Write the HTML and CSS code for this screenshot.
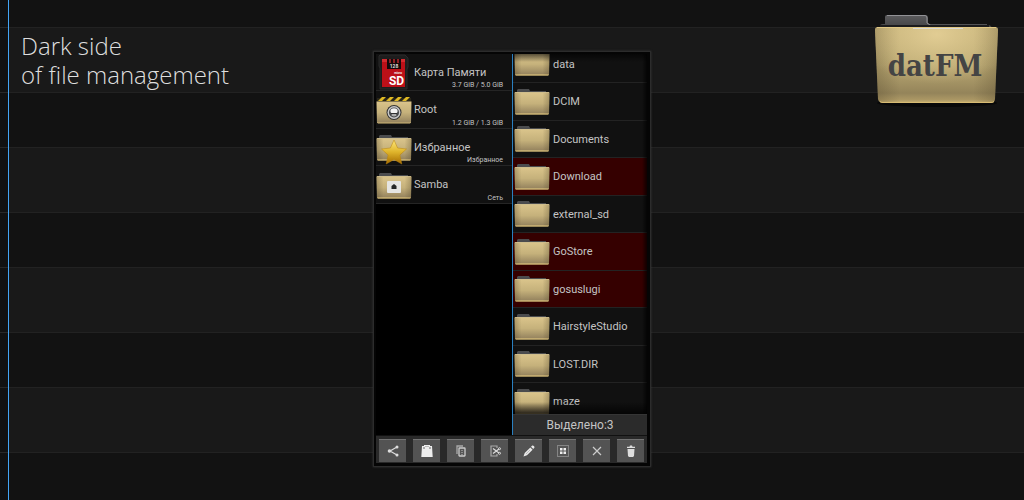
FILE: index.html
```html
<!DOCTYPE html>
<html lang="en">
<head>
<meta charset="utf-8">
<title>datFM</title>
<link rel="stylesheet" href="styles.css">
</head>
<body>
<svg class="defs" aria-hidden="true">
  <defs>
    <linearGradient id="tan" x1="0" y1="0" x2="0" y2="1">
      <stop offset="0" stop-color="#c9b57b"/><stop offset=".5" stop-color="#bba973"/><stop offset=".87" stop-color="#94845a"/><stop offset=".96" stop-color="#ac9865"/><stop offset="1" stop-color="#d0b673"/>
    </linearGradient>
    <radialGradient id="glow" cx=".5" cy=".1" r=".65">
      <stop offset="0" stop-color="#e6d198" stop-opacity=".85"/><stop offset="1" stop-color="#d9c58c" stop-opacity="0"/>
    </radialGradient>
    <linearGradient id="sides" x1="0" y1="0" x2="1" y2="0">
      <stop offset="0" stop-color="#4a3e24" stop-opacity=".3"/><stop offset=".2" stop-color="#4a3e24" stop-opacity="0"/><stop offset=".8" stop-color="#4a3e24" stop-opacity="0"/><stop offset="1" stop-color="#4a3e24" stop-opacity=".3"/>
    </linearGradient>
    <linearGradient id="small" x1="0" y1="0" x2="0" y2="1">
      <stop offset="0" stop-color="#dac48b"/><stop offset=".5" stop-color="#c5b17b"/><stop offset=".92" stop-color="#988660"/><stop offset="1" stop-color="#d6bd79"/>
    </linearGradient>
    <linearGradient id="tab" x1="0" y1="0" x2="0" y2="1">
      <stop offset="0" stop-color="#5c5c5e"/><stop offset="1" stop-color="#38383a"/>
    </linearGradient>
    <linearGradient id="gold" x1="0" y1="0" x2="0" y2="1">
      <stop offset="0" stop-color="#ffe878"/><stop offset=".5" stop-color="#dfb42b"/><stop offset="1" stop-color="#a56b00"/>
    </linearGradient>
    <symbol id="folder" viewBox="0 0 36 28">
      <path d="M3 4V2l1-1h11l1 2h16v2H2z" fill="#4b4c4e"/>
      <path d="M.5 4.500h35l-.5 21-1 1H2l-1-1z" fill="url(#small)"/>
      <path d="M.5 4.500h35l-.5 21-1 1H2l-1-1z" fill="url(#sides)"/>
      <path d="M1 4.500h34" stroke="#e0cc94" stroke-width=".8"/>
      <path d="M1.500 26h33" stroke="#d6bd79" stroke-width=".8"/>
    </symbol>
  </defs>
</svg>
<main class="banner">
  <h1 class="tagline">Dark side<br>of file management</h1>

  <section class="device" aria-label="File manager">
    <div class="panes">
      <nav class="places" aria-label="Places">
        <button class="place">
          <svg class="icon place-icon" viewBox="0 0 36 36" aria-hidden="true">
            <path d="M4 1h25l3 3v9l-1 2v20H4V14l-1-2V2z" fill="#1d1d1d" stroke="#2b2b2b"/>
            <path d="M6 5h23v28H6z" fill="#bc1018"/><path d="M6 5h23v3H6z" fill="#d42a2e"/>
            <path d="M11 5h14v10H11z" fill="#15090a"/>
            <path d="M14 5v4m4-4v4m4-4v4" stroke="#8f2024" stroke-width="2"/>
            <text class="sd-size" x="18" y="14" text-anchor="middle">128</text>
            <text class="sd-micro" x="22" y="20" text-anchor="middle">micro</text>
            <text class="sd-name" x="20.500" y="31" text-anchor="middle">SD</text>
          </svg>
          <span class="place-name">Карта Памяти</span><small class="detail">3.7 GiB / 5.0 GiB</small>
        </button>
        <button class="place">
          <svg class="icon place-icon" viewBox="0 0 36 36" aria-hidden="true">
            <path d="M1 6h34v5H1z" fill="#282519"/>
            <path d="M2 9l4-4h4L6 9zm8 0l4-4h4l-4 4zm8 0l4-4h4l-4 4zm8 0l4-4h4l-4 4z" fill="#dfb923"/>
            <path d="M.5 9.500h35l-.5 21-1 1H2l-1-1z" fill="url(#small)"/>
            <circle cx="18" cy="20.500" r="7.500" fill="#333"/><circle cx="18" cy="20.500" r="6.500" fill="#c8c8c8"/><circle cx="18" cy="20.500" r="5" fill="#444648"/><ellipse cx="18" cy="19" rx="3.600" ry="2.800" fill="#f2f2f2"/><ellipse cx="18" cy="23" rx="2.600" ry="1.400" fill="#aaa"/><path d="M15 21.500h6" stroke="#303030"/>
          </svg>
          <span class="place-name">Root</span><small class="detail">1.2 GiB / 1.3 GiB</small>
        </button>
        <button class="place">
          <svg class="icon place-icon" viewBox="0 0 36 36" aria-hidden="true">
            <use href="#folder" y="5" width="36" height="28"/>
            <path d="M18 11l3.600 8 8.900 1-6.600 6 1.900 9-7.800-4.500L10.200 35l1.900-9-6.600-6 8.900-1z" fill="url(#gold)" stroke="#b9820c" stroke-width=".5"/>
          </svg>
          <span class="place-name">Избранное</span><small class="detail">Избранное</small>
        </button>
        <button class="place">
          <svg class="icon place-icon" viewBox="0 0 36 36" aria-hidden="true">
            <use href="#folder" y="5" width="36" height="28"/>
            <rect x="11" y="14" width="14" height="12" rx="1" fill="#e5e5e2"/><path d="M15.500 19l2.500-2 2.500 2v3h-5z" fill="#252727"/>
          </svg>
          <span class="place-name">Samba</span><small class="detail">Сеть</small>
        </button>
      </nav>
      <div class="browser">
        <div class="files" role="group" aria-label="Folders">
          <button class="file"><svg class="icon folder-icon" aria-hidden="true"><use href="#folder"/></svg>data</button>
          <button class="file"><svg class="icon folder-icon" aria-hidden="true"><use href="#folder"/></svg>DCIM</button>
          <button class="file"><svg class="icon folder-icon" aria-hidden="true"><use href="#folder"/></svg>Documents</button>
          <button class="file selected" aria-pressed="true"><svg class="icon folder-icon" aria-hidden="true"><use href="#folder"/></svg>Download</button>
          <button class="file"><svg class="icon folder-icon" aria-hidden="true"><use href="#folder"/></svg>external_sd</button>
          <button class="file selected" aria-pressed="true"><svg class="icon folder-icon" aria-hidden="true"><use href="#folder"/></svg>GoStore</button>
          <button class="file selected" aria-pressed="true"><svg class="icon folder-icon" aria-hidden="true"><use href="#folder"/></svg>gosuslugi</button>
          <button class="file"><svg class="icon folder-icon" aria-hidden="true"><use href="#folder"/></svg>HairstyleStudio</button>
          <button class="file"><svg class="icon folder-icon" aria-hidden="true"><use href="#folder"/></svg>LOST.DIR</button>
          <button class="file"><svg class="icon folder-icon" aria-hidden="true"><use href="#folder"/></svg>maze</button>
        </div>
        <p class="status">Выделено:3</p>
      </div>
    </div>
    <div class="toolbar" role="toolbar" aria-label="Actions">
      <button class="tool" aria-label="Share"><svg class="glyph" viewBox="0 0 14 14"><path d="M11 3L4 7l7 4" fill="none" stroke="#ddd" stroke-width="1.200"/><circle cx="11" cy="3" r="1.500" fill="#ddd"/><circle cx="3.500" cy="7" r="1.800" fill="#ddd"/><circle cx="11" cy="11" r="1.500" fill="#ddd"/></svg></button>
      <button class="tool" aria-label="Paste"><svg class="glyph" viewBox="0 0 14 14"><path d="M2 2h2V1h6v1h2l.7 11H1.300z" fill="#eee"/><path d="M4 3v2m6-2v2" stroke="#666"/><path d="M5 2.500h4" stroke="#bbb"/></svg></button>
      <button class="tool" aria-label="Copy"><svg class="glyph" viewBox="0 0 14 14"><path d="M3 10V2h6" fill="none" stroke="#aaa" stroke-width="1.300"/><rect x="5" y="4" width="6" height="8" rx=".5" fill="#555" stroke="#ccc" stroke-width="1.300"/><path d="M7 6.500h2m-2 2h2m-2 2h2" stroke="#999" stroke-width=".8"/></svg></button>
      <button class="tool" aria-label="Cut"><svg class="glyph" viewBox="0 0 14 14"><path d="M9 4V2H3v10h6v-2" fill="none" stroke="#aaa" stroke-width="1.200"/><path d="M5 4.500l6 4.500M5 9.500L11 5" stroke="#ddd" stroke-width="1.200"/><circle cx="11.500" cy="4.700" r="1" fill="none" stroke="#ddd"/><circle cx="11.500" cy="9.300" r="1" fill="none" stroke="#ddd"/></svg></button>
      <button class="tool" aria-label="Rename"><svg class="glyph" viewBox="0 0 14 14"><path d="M1.500 12.500l1.200-3.500 5.600-5.500 2.300 2.300L5 11.300zM9 2.800l1.300-1.300q1.800-.3 2.300 1.800L11.300 5z" fill="#e8e8e8"/><path d="M4 10l4-4" stroke="#aaa" stroke-width=".7"/></svg></button>
      <button class="tool" aria-label="Select all"><svg class="glyph" viewBox="0 0 14 14"><rect x="1.500" y="1.500" width="11" height="11" fill="#555" stroke="#858585"/><path d="M4 4h2.500v2.500H4zm3.500 0H10v2.500H7.500zM4 7.500h2.500V10H4zm3.500 0H10V10H7.500z" fill="#eee"/></svg></button>
      <button class="tool" aria-label="Close"><svg class="glyph" viewBox="0 0 14 14"><path d="M3 3l8 8m0-8l-8 8" stroke="#ccc" stroke-width="1.200"/></svg></button>
      <button class="tool" aria-label="Delete"><svg class="glyph" viewBox="0 0 14 14"><path d="M3.500 5h7l-.5 7-1 1H5l-1-1zM3 4V2.800h2.500L6 1.500h2l.5 1.300H11V4z" fill="#ddd"/></svg></button>
    </div>
  </section>

  <svg class="logo" viewBox="0 0 128 96" role="img" aria-label="datFM">
    <ellipse cx="64" cy="91" rx="60" ry="4" fill="#080808"/>
    <path d="M7 17v-3q0-2 3-2h2V5q0-2 2-2h38q3 0 3 3v5l3 2h57q3 0 4 3v5H7z" fill="url(#tab)"/>
    <path d="M14 3.500h38q2 0 2 2.500v5l3 2h57" fill="none" stroke="#929296"/>
    <path d="M7 14h109" stroke="#1b1b1d" stroke-width="2"/>
    <path d="M5 15h117q3 0 3 3l-3 69q-.5 4-4 4H10q-4 0-5-4L2 18q0-3 3-3z" fill="url(#tan)"/>
    <path d="M5 15h117q3 0 3 3l-3 69q-.5 4-4 4H10q-4 0-5-4L2 18q0-3 3-3z" fill="url(#sides)"/>
    <path d="M5 15h117q3 0 3 3l-3 69q-.5 4-4 4H10q-4 0-5-4L2 18q0-3 3-3z" fill="url(#glow)"/>
    <path d="M4 15.500h119" stroke="#e1c883"/><path d="M40 16.500h50" stroke="#d8d8d4"/>
    <path d="M7 89.500q1 1 3 1h108q2 0 3-1" fill="none" stroke="#d7bb73"/>
    <text class="wordmark" x="62" y="64" text-anchor="middle">datFM</text>
  </svg>
</main>
</body>
</html>
```
FILE: styles.css
```css
* { box-sizing: border-box; }

body {
  margin: 0;
  background: #111;
  font-family: Roboto, "Liberation Sans", sans-serif;
  color: #c4c4c4;
}

button {
  margin: 0;
  padding: 0;
  border: 0;
  background: none;
  color: inherit;
  font: inherit;
  text-align: left;
}

.defs { position: absolute; width: 0; height: 0; }

.banner {
  display: grid;
  grid-template-columns: 1fr 278px 1fr;
  align-items: start;
  min-height: 100vh;
  background:
    linear-gradient(#43a5f5, #43a5f5) 8px 0 / 1px 100% no-repeat,
    linear-gradient(#282828 1px, #111 1px 65px, #282828 65px 66px, #111 66px) 0 27px / 8px 120px repeat-y,
    linear-gradient(#222 1px, #191919 1px 65px, #222 65px 66px, #121212 66px) 0 27px / 100% 120px;
}

.tagline {
  margin: 0;
  padding: 31px 0 0 21px;
  color: #dedede;
  font: 300 24px/29px "Open Sans", "Noto Sans", sans-serif;
}

.device {
  margin-top: 51px;
  padding: 2px 3px 3px 2px;
  border: 1px solid #2c2c2c;
  background: #050505;
  box-shadow: 0 0 2px #3a3a3a;
}

.panes {
  display: grid;
  grid-template-columns: 136px 1fr;
}

.places { background: #000; }

.place {
  position: relative;
  display: flex;
  align-items: center;
  width: 100%;
  height: 37px;
  border-bottom: 1px solid #252525;
  background: #111;
  font-size: 11px;
}

.place:nth-child(even) { height: 38px; }

.icon { flex: none; display: block; }
.place-icon { width: 36px; height: 36px; margin-right: 2px; }
.folder-icon { width: 36px; height: 28px; margin-right: 3px; }

.detail {
  position: absolute;
  right: 9px;
  bottom: 0;
  font-size: 7px;
  line-height: 9px;
}

.sd-size { fill: #ddd; font: bold 5px Roboto, sans-serif; }
.sd-micro { fill: #eee; font: bold 3px Roboto, sans-serif; }
.sd-name { fill: #fff; font: bold 12px/12px Roboto, sans-serif; }

.browser {
  border-left: 1px solid #2a80c0;
  background: #111;
}

.files {
  position: relative;
  height: 360px;
  overflow: hidden;
}

.files::after {
  content: "";
  position: absolute;
  inset: 0;
  background:
    linear-gradient(transparent, rgba(0, 0, 0, .75)) 0 100% / 100% 12px no-repeat,
    linear-gradient(rgba(0, 0, 0, .6), transparent) 0 0 / 100% 8px no-repeat,
    linear-gradient(90deg, transparent, rgba(0, 0, 0, .7)) 100% 0 / 5px 100% no-repeat;
  pointer-events: none;
}

.file {
  display: flex;
  align-items: center;
  width: 100%;
  height: 37px;
  padding-left: 1px;
  border-bottom: 1px solid #232323;
  font-size: 11px;
}

.file:nth-child(even) { height: 38px; }

.file:first-child {
  align-items: flex-end;
  height: 29px;
  padding-bottom: 5px;
  line-height: 24px;
}

.file.selected { background: #350000; }

.status {
  margin: 0;
  border-top: 1px solid #353535;
  background: #2b2b2b;
  font-size: 12px;
  line-height: 20px;
  text-align: center;
}

.toolbar {
  display: grid;
  grid-template-columns: repeat(8, 1fr);
  gap: 7px;
  padding: 3px 3px 1px;
  border-top: 1px solid #111;
  background: #292929;
}

.tool {
  display: flex;
  align-items: center;
  justify-content: center;
  height: 23px;
  border-top: 1px solid #727272;
  background: #535353;
}

.glyph { width: 14px; height: 14px; }

.logo {
  justify-self: end;
  width: 128px;
  height: 96px;
  margin: 12px 23px 0 0;
}

.wordmark {
  fill: #444;
  font: bold 29px "DejaVu Serif Condensed", "DejaVu Serif", serif;
}
```
